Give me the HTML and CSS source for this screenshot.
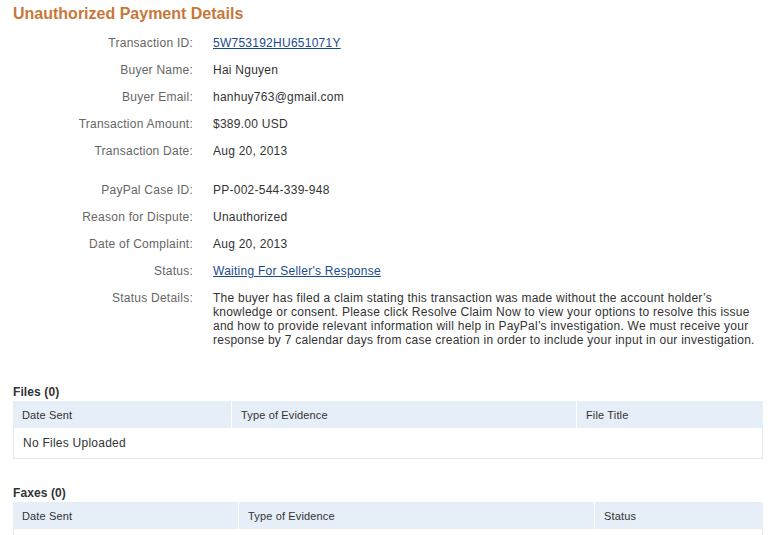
FILE: index.html
```html
<!DOCTYPE html>
<html>
<head>
<meta charset="utf-8">
<link rel="stylesheet" href="styles.css">
</head>
<body>
<div class="page">
  <h1 class="title">Unauthorized Payment Details</h1>
  <div class="details">
    <div class="group">
      <div class="row"><div class="label">Transaction ID:</div><div class="value"><a href="#">5W753192HU651071Y</a></div></div>
      <div class="row"><div class="label">Buyer Name:</div><div class="value">Hai Nguyen</div></div>
      <div class="row"><div class="label">Buyer Email:</div><div class="value">hanhuy763@gmail.com</div></div>
      <div class="row"><div class="label">Transaction Amount:</div><div class="value">$389.00 USD</div></div>
      <div class="row"><div class="label">Transaction Date:</div><div class="value">Aug 20, 2013</div></div>
    </div>
    <div class="group">
      <div class="row"><div class="label">PayPal Case ID:</div><div class="value">PP-002-544-339-948</div></div>
      <div class="row"><div class="label">Reason for Dispute:</div><div class="value">Unauthorized</div></div>
      <div class="row"><div class="label">Date of Complaint:</div><div class="value">Aug 20, 2013</div></div>
      <div class="row"><div class="label">Status:</div><div class="value"><a href="#">Waiting For Seller's Response</a></div></div>
      <div class="row"><div class="label">Status Details:</div><div class="value text">The buyer has filed a claim stating this transaction was made without the account holder’s<br>knowledge or consent. Please click Resolve Claim Now to view your options to resolve this issue and how to provide relevant information will help in PayPal’s investigation. We must receive your response by 7 calendar days from case creation in order to include your input in our investigation.</div></div>
    </div>
  </div>

  <div class="section files">
    <h2 class="section-title">Files (0)</h2>
    <div class="table">
      <div class="thead">
        <div class="th c1">Date Sent</div>
        <div class="th c2">Type of Evidence</div>
        <div class="th c3">File Title</div>
      </div>
      <div class="tbody">No Files Uploaded</div>
    </div>
  </div>

  <div class="section faxes">
    <h2 class="section-title">Faxes (0)</h2>
    <div class="table">
      <div class="thead">
        <div class="th f1">Date Sent</div>
        <div class="th f2">Type of Evidence</div>
        <div class="th f3">Status</div>
      </div>
      <div class="tbody empty"></div>
    </div>
  </div>
</div>
</body>
</html>
```
FILE: styles.css
```css
html, body {
  margin: 0;
  padding: 0;
  background: #fff;
}
body {
  font-family: "Liberation Sans", Arial, sans-serif;
  font-size: 12px;
  color: #333;
}
.page {
  padding: 3px 17px 0 13px;
}
.title {
  margin: 0;
  font-size: 16px;
  line-height: 21px;
  font-weight: bold;
  color: #c8773a;
}
.details {
  display: flex;
  flex-direction: column;
  gap: 25px;
  margin-top: 12px;
  letter-spacing: 0.25px;
}
.group {
  display: flex;
  flex-direction: column;
  gap: 13px;
}
.row {
  display: flex;
  line-height: 14px;
}
.label {
  width: 180px;
  flex: none;
  text-align: right;
  color: #666;
  margin-right: 20px;
}
.value {
  color: #333;
  flex: 1;
}
.value.text {
  width: 557px;
  flex: none;
}
.value a {
  color: #1a4b8c;
  text-decoration: underline;
}
.section {
  display: flex;
  flex-direction: column;
}
.files {
  margin-top: 38px;
}
.faxes {
  margin-top: 27px;
}
.section-title {
  margin: 0 0 2px;
  font-size: 12px;
  line-height: 14px;
  font-weight: bold;
  color: #333;
  letter-spacing: 0.1px;
}
.table {
  width: 750px;
}
.thead {
  display: flex;
  background: #e6eef7;
  height: 27px;
}
.th {
  font-size: 11px;
  line-height: 26px;
  padding-top: 1px;
  padding-left: 9px;
  color: #333;
  box-sizing: border-box;
  letter-spacing: 0.15px;
}
.th + .th {
  border-left: 1px solid #fff;
}
.c1 { width: 218px; }
.c2 { width: 345px; }
.c3 { flex: 1; }
.f1 { width: 225px; }
.f2 { width: 356px; }
.f3 { flex: 1; }
.tbody {
  border: 1px solid #e6e6e6;
  border-top: none;
  height: 29px;
  line-height: 29px;
  padding-top: 1px;
  padding-left: 9px;
  font-size: 12px;
  color: #333;
  letter-spacing: 0.25px;
}
.tbody.empty {
  height: 29px;
}
```
